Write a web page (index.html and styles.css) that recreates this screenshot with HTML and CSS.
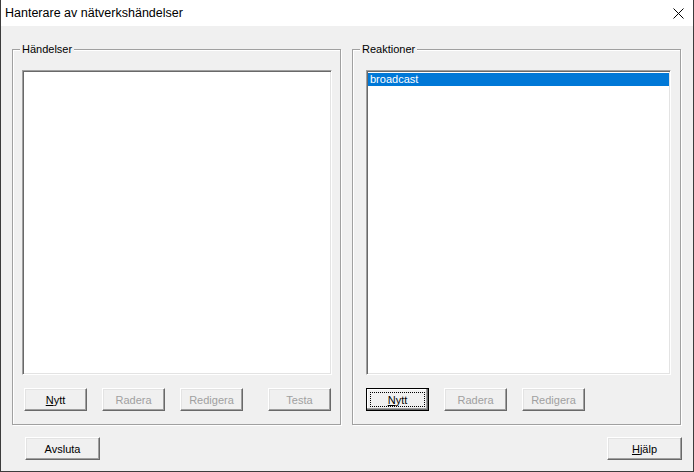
FILE: index.html
```html
<!DOCTYPE html>
<html lang="sv">
<head>
  <meta charset="UTF-8">
  <title>Hanterare av nätverkshändelser</title>
  <link rel="stylesheet" href="styles.css">
</head>
<body>
  <div class="window">
    <div class="titlebar">
      <span class="title">Hanterare av nätverkshändelser</span>
      <svg class="close" width="11" height="11" viewBox="0 0 11 11">
        <path d="M0.5 0.5 L10.5 10.5 M10.5 0.5 L0.5 10.5" stroke="#000" stroke-width="1" fill="none"/>
      </svg>
    </div>
    <div class="content">
      <div class="groups">
        <div class="group events">
          <span class="legend">Händelser</span>
          <div class="listbox"></div>
          <div class="buttons">
            <button class="btn"><u>N</u>ytt</button>
            <button class="btn" disabled>Radera</button>
            <button class="btn" disabled>Redigera</button>
            <button class="btn far" disabled>Testa</button>
          </div>
        </div>
        <div class="group reactions">
          <span class="legend">Reaktioner</span>
          <div class="listbox">
            <div class="item selected">broadcast</div>
          </div>
          <div class="buttons">
            <button class="btn focused"><u>N</u>ytt</button>
            <button class="btn" disabled>Radera</button>
            <button class="btn" disabled>Redigera</button>
          </div>
        </div>
      </div>
      <div class="footer">
        <button class="btn large">Avsluta</button>
        <button class="btn large"><u>H</u>jälp</button>
      </div>
    </div>
  </div>
</body>
</html>
```

FILE: styles.css
```css
* { box-sizing: border-box; }
body {
  margin: 0; padding: 0;
  background: #f0f0f0;
  font-family: "Liberation Sans", Arial, sans-serif;
  font-size: 11px;
  color: #000;
}
.window {
  width: 694px; height: 472px;
  background: #f0f0f0;
  border: 1px solid #3c3c3c; border-top: none;
}
.titlebar {
  height: 26px;
  background: #fff;
  display: flex; align-items: center;
}
.title { font-size: 12.5px; padding-left: 4px; }
.close { margin-left: auto; margin-right: 9px; margin-top: 1px; }

.content { padding: 23px 12px 0 11px; }
.groups { display: flex; gap: 11px; }
.group {
  position: relative;
  width: 329px; height: 376px;
  border: 1px solid #a0a0a0;
  box-shadow: inset 1px 1px #fff, 1px 1px #fff;
  padding-top: 20px;
}
.events { padding-left: 9px; }
.reactions { padding-left: 13px; }
.legend {
  position: absolute; top: -8px; left: 7px;
  padding: 0 2px;
  background: #f0f0f0;
  line-height: 14px;
}
.listbox {
  height: 305px;
  background: #fff;
  border: 1px solid; border-color: #a0a0a0 #fff #fff #a0a0a0;
  box-shadow: inset 1px 1px #696969, inset -1px -1px #e3e3e3;
  padding: 2px 1px;
}
.events .listbox { width: 310px; }
.reactions .listbox { width: 305px; }
.item { height: 13px; line-height: 13px; padding-left: 2px; }
.item.selected { background: #0078d7; color: #fff; }

.buttons { display: flex; gap: 15px; margin-top: 13px; }
.events .buttons { padding-left: 2px; }
.btn {
  width: 63px; height: 23px;
  font: inherit; color: #000;
  background: #f0f0f0;
  border: 1px solid; border-color: #fff #696969 #696969 #fff;
  box-shadow: inset -1px -1px #a0a0a0, inset 1px 1px #e3e3e3;
  padding: 0;
  position: relative;
}
.btn:disabled { color: #a0a0a0; }
.btn.far { margin-left: 10px; }
.btn.focused {
  border: 1px solid #000;
  box-shadow: inset -1px -1px #696969, inset -2px -2px #a0a0a0, inset 1px 1px #fff;
}
.btn.focused::after {
  content: "";
  position: absolute; top: 3px; left: 3px; right: 3px; bottom: 3px;
  border: 1px dotted #000;
}
.btn u { text-underline-offset: 1px; }

.footer {
  display: flex; justify-content: space-between;
  margin-top: 12px; padding-left: 13px; margin-right: -1px;
}
.btn.large { width: 75px; }
```
